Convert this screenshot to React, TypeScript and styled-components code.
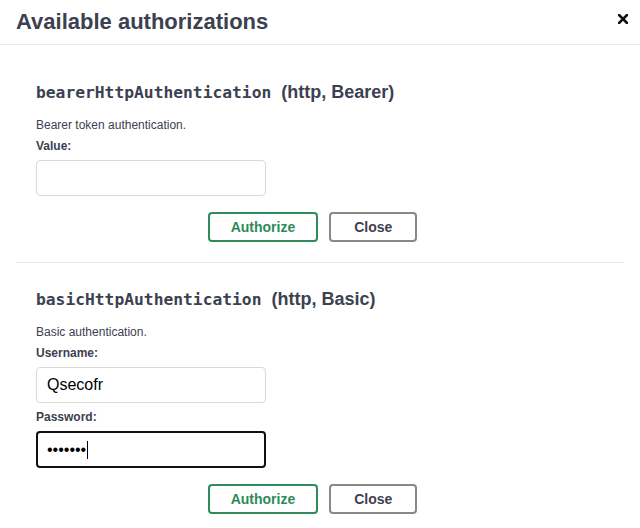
import React from "react";
import styled, { createGlobalStyle } from "styled-components";

const Global = createGlobalStyle`
  html, body { margin: 0; padding: 0; background: #fff; }
  body { font-family: "Liberation Sans", Arial, sans-serif; color: #3b4151; }
  * { box-sizing: border-box; }
`;

const Dialog = styled.div`
  width: 640px;
  height: 528px;
  background: #fff;
  overflow: hidden;
`;

const Header = styled.header`
  height: 45px;
  padding: 0 9px 0 16px;
  display: flex;
  align-items: center;
  justify-content: space-between;
  border-bottom: 1px solid #ebebeb;
`;

const Title = styled.h3`
  margin: 0;
  font-size: 22px;
  font-weight: 700;
  color: #3b4151;
  line-height: 26px;
`;

const CloseX = styled.button`
  width: 16px;
  height: 16px;
  padding: 0;
  border: 0;
  background: none;
  display: flex;
  align-items: center;
  justify-content: center;
  cursor: pointer;
  margin-top: -6px;
`;

const Content = styled.div`
  padding: 11px 16px 0;
`;

const Section = styled.section<{ $last?: boolean }>`
  padding: 26px 20px 20px;
  border-bottom: ${(p) => (p.$last ? "none" : "1px solid #ebebeb")};
  display: flex;
  flex-direction: column;
  align-items: flex-start;
`;

const Heading = styled.h4`
  margin: 0 0 15px;
  height: 20px;
  font-size: 18px;
  line-height: 20px;
  font-weight: 700;
  color: #3b4151;
  white-space: nowrap;
`;

const Code = styled.code`
  font-family: "DejaVu Sans Mono", "Liberation Mono", monospace;
  font-size: 16.3px;
  line-height: 1;
  font-weight: 700;
`;

const Desc = styled.p`
  margin: 0 0 5px;
  font-size: 12px;
  line-height: 16px;
`;

const Label = styled.label`
  display: block;
  margin: 0 0 6px;
  font-size: 12px;
  line-height: 16px;
  font-weight: 700;
`;

const Input = styled.input`
  width: 230px;
  height: 36px;
  margin: 0 0 6px;
  padding: 0 10px;
  border: 1px solid #d9d9d9;
  border-radius: 4px;
  font-family: "Liberation Sans", Arial, sans-serif;
  font-size: 16px;
  color: #000;
  outline: none;
  background: #fff;
`;

const FocusBox = styled.div`
  width: 230px;
  height: 37px;
  margin: 0 0 6px;
  padding: 0 9px;
  border: 2px solid #111;
  border-radius: 4px;
  display: flex;
  align-items: center;
  font-family: "Liberation Sans", Arial, sans-serif;
  font-size: 16px;
  color: #000;
`;

const Caret = styled.span`
  display: inline-block;
  width: 1px;
  height: 18px;
  background: #000;
  margin-left: 1px;
`;

const Buttons = styled.div`
  align-self: stretch;
  display: flex;
  justify-content: center;
  gap: 11px;
  padding-right: 15px;
  margin-top: 10px;
`;

const Btn = styled.button<{ $primary?: boolean }>`
  height: 30px;
  padding: 0 ${(p) => (p.$primary ? 21 : 23)}px;
  border: 2px solid ${(p) => (p.$primary ? "#2f8a5c" : "#888")};
  border-radius: 4px;
  background: #fff;
  color: ${(p) => (p.$primary ? "#2f8a5c" : "#3b4151")};
  font-family: "Liberation Sans", Arial, sans-serif;
  font-size: 14px;
  font-weight: 700;
  cursor: pointer;
`;

export default function App() {
  return (
    <Dialog>
      <Global />
      <Header>
        <Title>Available authorizations</Title>
        <CloseX aria-label="Close">
          <svg width="10" height="10" viewBox="0 0 10 10">
            <path d="M1 1 L9 9 M9 1 L1 9" stroke="#111" strokeWidth="2.6" strokeLinecap="square" />
          </svg>
        </CloseX>
      </Header>
      <Content>
        <Section>
          <Heading>
            <Code>bearerHttpAuthentication</Code>&nbsp; (http, Bearer)
          </Heading>
          <Desc>Bearer token authentication.</Desc>
          <Label>Value:</Label>
          <Input type="text" defaultValue="" />
          <Buttons>
            <Btn $primary>Authorize</Btn>
            <Btn>Close</Btn>
          </Buttons>
        </Section>
        <Section $last>
          <Heading>
            <Code>basicHttpAuthentication</Code>&nbsp; (http, Basic)
          </Heading>
          <Desc>Basic authentication.</Desc>
          <Label>Username:</Label>
          <Input type="text" defaultValue="Qsecofr" />
          <Label>Password:</Label>
          <FocusBox>
            <span>•••••••</span>
            <Caret />
          </FocusBox>
          <Buttons>
            <Btn $primary>Authorize</Btn>
            <Btn>Close</Btn>
          </Buttons>
        </Section>
      </Content>
    </Dialog>
  );
}
